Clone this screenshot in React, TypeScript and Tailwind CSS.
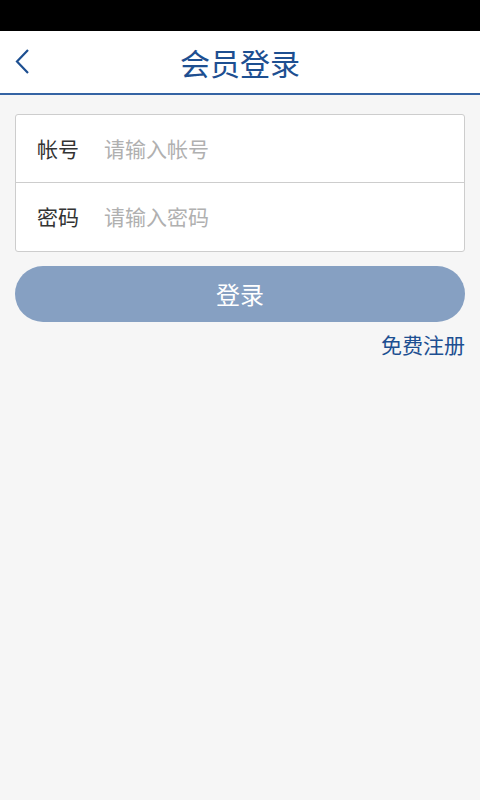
import React, { useState } from 'react';

const FONT = { fontFamily: '"Noto Sans CJK SC", "Noto Sans", sans-serif' };

const App: React.FC = () => {
  const [account, setAccount] = useState('');
  const [password, setPassword] = useState('');

  return (
    <div className="w-[480px] h-[800px] bg-[#f6f6f6] flex flex-col" style={FONT}>
      {/* Status bar */}
      <div className="h-[31px] bg-black" />

      {/* Header */}
      <div className="relative h-[64px] bg-white border-b-2 border-[#3564a4] flex items-center justify-center">
        <button className="absolute left-[13px] top-[17px] w-[20px] h-[28px] flex items-center">
          <svg width="20" height="28" viewBox="0 0 20 28" fill="none">
            <path d="M15 2 L4 13.5 L15 25" stroke="#1d4f91" strokeWidth="2.2" />
          </svg>
        </button>
        <h1 className="text-[30px] leading-none text-[#1d4f91] -mt-[1px]">会员登录</h1>
      </div>

      {/* Form */}
      <div className="px-[15px] pt-[19px]">
        <div className="bg-white border border-[#cdcdcd] rounded-[3px] divide-y divide-[#cdcdcd]">
          <label className="h-[68px] flex items-center pl-[21px]">
            <span className="text-[21px] text-[#333] w-[67px]">帐号</span>
            <input
              value={account}
              onChange={(e) => setAccount(e.target.value)}
              placeholder="请输入帐号"
              className="flex-1 text-[21px] outline-none bg-transparent placeholder:text-[#b0b0b0]"
              style={FONT}
            />
          </label>
          <label className="h-[68px] flex items-center pl-[21px]">
            <span className="text-[21px] text-[#333] w-[67px]">密码</span>
            <input
              type="password"
              value={password}
              onChange={(e) => setPassword(e.target.value)}
              placeholder="请输入密码"
              className="flex-1 text-[21px] outline-none bg-transparent placeholder:text-[#b0b0b0]"
              style={FONT}
            />
          </label>
        </div>

        <button className="mt-[14px] w-full h-[56px] rounded-full bg-[#86a0c2] text-white text-[24px]" style={FONT}>
          登录
        </button>

        <div className="flex justify-end mt-[7px]">
          <a className="text-[21px] text-[#1d4f91]">免费注册</a>
        </div>
      </div>
    </div>
  );
};

export default App;
